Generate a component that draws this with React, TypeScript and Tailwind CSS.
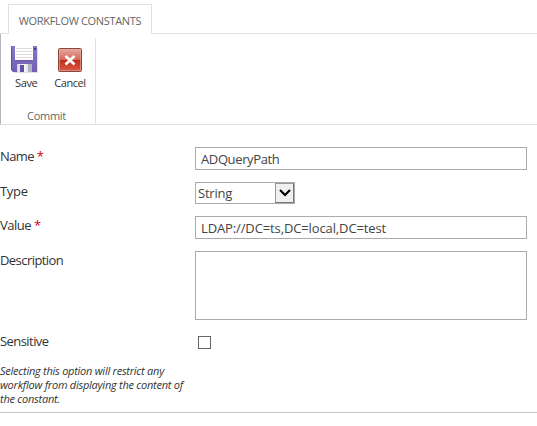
import type { ReactNode } from "react";

function SaveIcon() {
  return (
    <svg width="28" height="28" viewBox="0 0 28 28" className="block">
      <defs>
        <linearGradient id="disk" x1="0" y1="0" x2="0" y2="1">
          <stop offset="0" stopColor="#8878c6" />
          <stop offset="1" stopColor="#705db4" />
        </linearGradient>
        <linearGradient id="shutter" x1="0" y1="0" x2="1" y2="0">
          <stop offset="0" stopColor="#d6d6dc" />
          <stop offset="0.5" stopColor="#f8f8fa" />
          <stop offset="1" stopColor="#c8c8d0" />
        </linearGradient>
      </defs>
      <path d="M3 3h25v25H4z" fill="#000" opacity="0.12" />
      <path d="M1 1h26v26H3l-2-2z" fill="url(#disk)" />
      <path d="M1.5 1.5v23l2 2" stroke="#6252a4" fill="none" />
      <path d="M5 1h18v14H5z" fill="#fff" />
      <path d="M6 3.5h16M6 6.5h16M6 9.5h16M6 12.5h16" stroke="#dcdcdf" />
      <path d="M5 15.5h18" stroke="#6d5bad" />
      <path d="M24 3h2v2h-2z" fill="#4b3986" />
      <path d="M7 19h15v8H7z" fill="url(#shutter)" />
      <path d="M10 20h4v7h-4z" fill="#6350a4" />
      <path d="M18 19h4v8h-4z" fill="#b4b3c0" />
    </svg>
  );
}

function CancelIcon() {
  return (
    <svg width="24" height="24" viewBox="0 0 24 24" className="block">
      <defs>
        <linearGradient id="cancel" x1="0" y1="0" x2="0" y2="1">
          <stop offset="0" stopColor="#e7aaa0" />
          <stop offset="0.48" stopColor="#d4695a" />
          <stop offset="0.52" stopColor="#be2f1b" />
          <stop offset="1" stopColor="#dc5c48" />
        </linearGradient>
      </defs>
      <rect x="0.5" y="0.5" width="23" height="23" rx="1" fill="url(#cancel)" stroke="#88473f" />
      <rect x="1.5" y="1.5" width="21" height="21" fill="none" stroke="#edaaa0" opacity="0.6" />
      <path d="M7.5 8l9 8.5M16.5 8l-9 8.5" stroke="#fff" strokeWidth="2.7" />
    </svg>
  );
}

function Row({ label, required, tracking, className, children }: { label: string; required?: boolean; tracking: string; className: string; children: ReactNode }) {
  return (
    <div className={`flex items-start ${className}`}>
      <div className={`w-[195px] shrink-0 text-[13px] leading-[19px] text-[#333] ${tracking}`}>
        {label}
        {required && <span className="text-[#c80010]"> *</span>}
      </div>
      {children}
    </div>
  );
}

const field = "block w-[332px] rounded-none border border-[#ababab] bg-white px-[5px] text-[13px] text-[#444] outline-none";

export default function App() {
  return (
    <main className="h-[426px] w-[537px] overflow-hidden bg-white font-['Open_Sans','Noto_Sans',sans-serif]">
      <header className="flex h-[34px] items-end">
        <div className="h-px w-2 bg-[#e1e1e1]" />
        <div className="flex h-[30px] w-[144px] items-center justify-center border border-b-0 border-[#e1e1e1] text-[11px] whitespace-nowrap tracking-[-0.33px] text-[#666]">
          <span className="pt-1">WORKFLOW CONSTANTS</span>
        </div>
        <div className="h-px flex-1 bg-[#e1e1e1]" />
      </header>

      <section className="h-[91px] border-b border-l border-b-[#e1e1e1] border-l-[#b6b6bd] pt-1">
        <div className="flex h-[86px] w-[95px] flex-col border-r border-[#e1e1e1] text-[11px] text-[#333]">
          <div className="flex pt-[7px]">
            <button className="ml-[9px] flex w-[30px] flex-col items-start tracking-[-0.35px]">
              <SaveIcon />
              <span className="mt-[2px] ml-[5px] leading-[15px]">Save</span>
            </button>
            <button className="ml-[12px] flex w-[36px] flex-col items-center pt-[3px] tracking-[-0.45px]">
              <CancelIcon />
              <span className="mt-[3px] leading-[15px]">Cancel</span>
            </button>
          </div>
          <div className="mt-[17px] pr-[3px] text-center leading-[17px] tracking-[-0.3px] text-[#666]">Commit</div>
        </div>
      </section>

      <form className="flex h-[288px] flex-col border-b border-[#c6c6c6] pt-[22px]">
        <Row label="Name" required tracking="tracking-[-0.6px]" className="h-[35px]">
          <input className={`${field} h-[23px] pt-px tracking-[-0.38px]`} defaultValue="ADQueryPath" />
        </Row>
        <Row label="Type" tracking="tracking-[-0.3px]" className="h-[34px]">
          <div className="flex h-[22px] w-[100px] border border-[#ababab] text-[13px] text-[#444]">
            <span className="flex-1 pt-px pl-[2px] leading-[19px] tracking-[-0.2px]">String</span>
            <span className="flex h-[20px] w-[19px] items-center justify-center border border-[#999] border-r-[#777] border-b-[#777] bg-[#f0f0f0]">
              <svg width="12" height="8" viewBox="0 0 12 8">
                <path d="M1 1l5 5 5-5" fill="none" stroke="#000" strokeWidth="2.1" />
              </svg>
            </span>
          </div>
        </Row>
        <Row label="Value" required tracking="tracking-[-0.5px]" className="h-[35px]">
          <input className={`${field} h-[23px] pt-px tracking-[-0.12px]`} defaultValue="LDAP://DC=ts,DC=local,DC=test" />
        </Row>
        <Row label="Description" tracking="tracking-[-0.56px]" className="h-[81px]">
          <textarea className={`${field} h-[69px] resize-none`} />
        </Row>
        <Row label="Sensitive" tracking="tracking-[-0.56px]" className="h-[32px]">
          <input type="checkbox" className="mt-1 ml-[3px] size-[13px] appearance-none border border-[#666] bg-white" />
        </Row>
        <p className="text-[11px] leading-[14px] tracking-[-0.25px] whitespace-nowrap text-[#333] italic">
          Selecting this option will restrict any<br />
          workflow from displaying the content of<br />
          the constant.
        </p>
      </form>
    </main>
  );
}
